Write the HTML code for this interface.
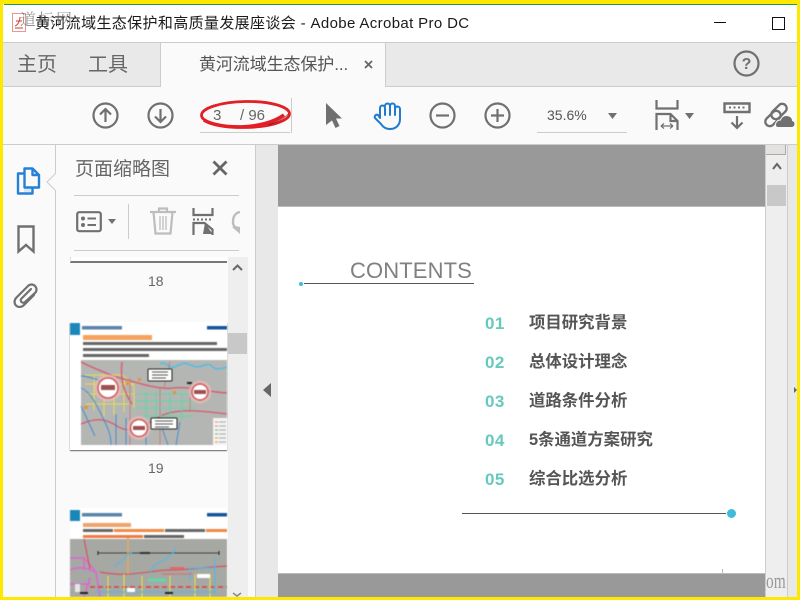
<!DOCTYPE html>
<html><head><meta charset="utf-8">
<style>
html,body{margin:0;padding:0;width:800px;height:600px;overflow:hidden;background:#fafafa}
body{position:relative;font-family:"Liberation Sans","Noto Sans CJK SC",sans-serif}
.a{position:absolute}
.t{position:absolute;white-space:nowrap;line-height:1}
svg{position:absolute;overflow:visible}
.blur{filter:blur(.45px)}
</style></head><body>
<div class="a" style="left:0;top:5px;width:800px;height:37px;background:#fff"></div>
<div class="a" style="left:0;top:42px;width:800px;height:1px;background:#ccc"></div>
<div class="a" style="left:0;top:43px;width:800px;height:43px;background:#e9e9e9"></div>
<div class="a" style="left:0;top:86px;width:800px;height:1px;background:#ccc"></div>
<div class="a" style="left:160px;top:43px;width:226px;height:44px;background:#fafafa;border-left:1px solid #ccc;border-right:1px solid #ccc;box-sizing:border-box"></div>
<div class="a" style="left:0;top:144px;width:800px;height:1px;background:#ccc"></div>

<!-- title -->
<svg style="left:12px;top:13px" width="14" height="20" viewBox="0 0 14 20"><rect x="0.5" y="0.5" width="13" height="18" fill="#fff" stroke="#e39a92"/><path d="M3 13c3-1 5-5 5-9M4 8h6M3 15h8" stroke="#d83a2c" fill="none"/></svg>
<div class="t" style="left:35px;top:16px;font-size:15px;color:#1a1a1a;letter-spacing:.36px">黄河流域生态保护和高质量发展座谈会 - Adobe Acrobat Pro DC</div>
<div class="t" style="left:20px;top:11px;font-size:16px;color:#666;opacity:.7;font-family:'Noto Serif CJK SC',serif;letter-spacing:2px">道标网</div>
<div class="a" style="left:714px;top:22px;width:12px;height:1px;background:#111"></div>
<div class="a" style="left:772px;top:17px;width:11px;height:11px;border:1px solid #111"></div>

<!-- tabs -->
<div class="t" style="left:17px;top:55px;font-size:20px;color:#666">主页</div>
<div class="t" style="left:88px;top:55px;font-size:20px;color:#666">工具</div>
<div class="t" style="left:199px;top:56px;font-size:17px;color:#555;letter-spacing:-.1px">黄河流域生态保护...</div>
<svg style="left:364px;top:60px" width="9" height="9" viewBox="0 0 9 9"><path d="M1 1l7 7M8 1l-7 7" stroke="#666" stroke-width="1.800"/></svg>
<svg style="left:733px;top:50px" width="27" height="27" viewBox="0 0 27 27"><circle cx="13.500" cy="13.500" r="12" fill="none" stroke="#707070" stroke-width="2.200"/><text x="13.500" y="19" font-size="16" font-weight="bold" fill="#707070" text-anchor="middle" font-family="Liberation Sans">?</text></svg>

<!-- toolbar -->
<svg style="left:92px;top:102px" width="27" height="27" viewBox="0 0 27 27" fill="none" stroke="#707070" stroke-width="2.200"><circle cx="13.500" cy="13.500" r="12"/><path d="M13.500 20V7M8 12.500l5.500-5.500 5.500 5.500"/></svg>
<svg style="left:147px;top:102px" width="27" height="27" viewBox="0 0 27 27" fill="none" stroke="#707070" stroke-width="2.200"><circle cx="13.500" cy="13.500" r="12"/><path d="M13.500 7v13M8 14.500l5.500 5.500 5.500-5.500"/></svg>
<div class="t" style="left:213px;top:108px;font-size:15px;color:#666">3</div>
<div class="t" style="left:240px;top:108px;font-size:15px;color:#666">/ 96</div>
<div class="a" style="left:200px;top:132px;width:90px;height:1px;background:#ccc"></div>
<div class="a" style="left:291px;top:98px;width:1px;height:35px;background:#ccc"></div>
<svg style="left:198px;top:98px" width="96" height="36" viewBox="0 0 96 36"><ellipse cx="47.500" cy="16.500" rx="44" ry="13" fill="none" stroke="#e21f26" stroke-width="2.800" transform="rotate(-1 47.500 16.500)"/><path d="M6 22c14 9 58 11 80-5" fill="none" stroke="#e21f26" stroke-width="3.600"/><path d="M70 27c8-2 16-6 20-11" fill="none" stroke="#6b1616" stroke-width="1" opacity=".6"/></svg>
<svg style="left:325px;top:102px" width="18" height="27" viewBox="0 0 18 27"><path d="M1 1L17 16.500H11L14.500 24 10.500 26 7 18.500 1 23Z" fill="#707070"/></svg>
<svg style="left:373px;top:101px" width="29" height="30" viewBox="0 0 29 30" fill="none" stroke="#1f7bd0" stroke-width="2" stroke-linecap="round" stroke-linejoin="round"><path d="M7 17V7a2.500 2.500 0 0 1 5 0V14M12 5a2.500 2.500 0 0 1 5 0V14M17 5a2.500 2.500 0 0 1 5 0V14M22 8a2.500 2.500 0 0 1 5 0V18c0 6-4 10-10 10-4 0-7-2-9-5L2 17c-1-2 1-4 3-3l2 3"/></svg>
<svg style="left:429px;top:102px" width="27" height="27" viewBox="0 0 27 27" fill="none" stroke="#707070" stroke-width="2.200"><circle cx="13.500" cy="13.500" r="12"/><path d="M7 13.500h13"/></svg>
<svg style="left:484px;top:102px" width="27" height="27" viewBox="0 0 27 27" fill="none" stroke="#707070" stroke-width="2.200"><circle cx="13.500" cy="13.500" r="12"/><path d="M7 13.500h13M13.500 7v13"/></svg>
<div class="t" style="left:547px;top:108px;font-size:14px;color:#555">35.6%</div>
<svg style="left:608px;top:113px" width="10" height="6"><path d="M0 0h9L4.500 6Z" fill="#707070"/></svg>
<div class="a" style="left:537px;top:132px;width:90px;height:1px;background:#ccc"></div>
<svg style="left:655px;top:100px" width="24" height="32" viewBox="0 0 24 32" fill="none" stroke="#707070" stroke-width="2.200"><path d="M1.500 0v8.500h21V0"/><path d="M1.500 30V14h14l7 7v9M15.500 14v7h7"/><path d="M6 26h12M6 26l3-2.500M6 26l3 2.500M18 26l-3-2.500M18 26l-3 2.500" stroke-width="1.200"/></svg>
<svg style="left:685px;top:113px" width="10" height="6"><path d="M0 0h9L4.500 6Z" fill="#707070"/></svg>
<svg style="left:723px;top:102px" width="28" height="27" viewBox="0 0 28 27"><path d="M1.500 1.500h25v8.500h-25z" fill="none" stroke="#707070" stroke-width="2.400"/><path d="M6 5.500h2M10.500 5.500h2M15 5.500h2M19.500 5.500h2" stroke="#707070" stroke-width="2"/><path d="M14 14v12M8.500 20.500l5.500 5.500 5.500-5.500" fill="none" stroke="#707070" stroke-width="2.200"/></svg>
<svg style="left:764px;top:101px" width="31" height="28" viewBox="0 0 31 28"><g fill="none" stroke="#707070" stroke-width="2.300"><rect x="6" y="6" width="18" height="9" rx="4.500" transform="rotate(-45 15 10.500)"/><rect x="0" y="13" width="18" height="9" rx="4.500" transform="rotate(-45 9 17.500)"/></g><path d="M12 26c-1.500-4 1-7 4.500-7 1-3 3.500-4.500 6-4.500 3.500 0 6 2.500 6 5 1.500.5 2.500 2 2.500 3.500 0 2-1.500 3.500-3 3.500H14z" fill="#707070" stroke="#fafafa" stroke-width="1"/></svg>

<!-- left rail -->
<div class="a" style="left:55px;top:145px;width:1px;height:455px;background:#ccc"></div>
<svg style="left:15px;top:166px" width="26" height="30" viewBox="0 0 26 30" fill="none" stroke="#2680d6" stroke-width="2.400" stroke-linejoin="round"><rect x="9" y="8" width="9" height="18" fill="#dbe8f5" stroke="none"/><path d="M9.500 2.500h8l6.500 6.500v12.500H9.500z" fill="#fafafa"/><path d="M17.500 2.500V9H24"/><path d="M9.500 7.500H3V27.500h14.500v-6"/></svg>
<svg style="left:46px;top:173px" width="10" height="18" viewBox="0 0 10 18"><path d="M10 0L1 9l9 9" fill="#fafafa" stroke="#ccc"/></svg>
<svg style="left:17px;top:225px" width="18" height="29" viewBox="0 0 18 29"><path d="M1.500 1.500h15v25L9 20l-7.500 6.500z" fill="none" stroke="#707070" stroke-width="2.400"/></svg>
<svg style="left:13px;top:281px" width="26" height="28" viewBox="0 0 26 28" fill="none" stroke="#707070" stroke-width="2.200" stroke-linecap="round"><path d="M21 14L11 24c-2.500 2.500-6 2.500-8 .5s-2-5.500.5-8L15 5c2-2 5-2 7 0s2 5 0 7L12 21c-1 1-2.500 1-3.500 0s-1-2.500 0-3.500L18 8"/></svg>

<!-- panel -->
<div class="t" style="left:75px;top:160px;font-size:19px;color:#666">页面缩略图</div>
<svg style="left:212px;top:160px" width="16" height="16" viewBox="0 0 16 16"><path d="M1.500 1.500l13 13M14.500 1.500l-13 13" stroke="#666" stroke-width="2.800"/></svg>
<div class="a" style="left:74px;top:195px;width:165px;height:1px;background:#ccc"></div>
<svg style="left:76px;top:211px" width="26" height="22" viewBox="0 0 26 22"><rect x="1.200" y="1.200" width="23.600" height="19" rx="2" fill="none" stroke="#707070" stroke-width="2.200"/><circle cx="7" cy="7.500" r="2" fill="#707070"/><circle cx="7" cy="14" r="2" fill="#707070"/><path d="M11.500 7.500H20M11.500 14H20" stroke="#707070" stroke-width="2"/></svg>
<svg style="left:108px;top:219px" width="9" height="6"><path d="M0 0h8L4 5Z" fill="#707070"/></svg>
<div class="a" style="left:128px;top:204px;width:1px;height:35px;background:#ccc"></div>
<svg style="left:150px;top:207px" width="26" height="28" viewBox="0 0 26 28" fill="none" stroke="#bdbdbd" stroke-width="2.200"><path d="M0 5h26M9 5V1.500h8V5M3.500 5l2 21.500h15l2-21.500"/><path d="M10 9v14M13 9v14M16 9v14" stroke-width="1.300"/></svg>
<svg style="left:192px;top:208px" width="22" height="27" viewBox="0 0 22 27" fill="none" stroke="#707070" stroke-width="2.200"><path d="M1.500 0v7h19V0"/><path d="M1 11.500h2M5 11.500h2M9 11.500h2M13 11.500h2M17 11.500h2" stroke-width="2"/><path d="M1.500 27V15h11l8 6.500V27"/><path d="M13 15l7.500 11H11z" fill="#707070" stroke="none"/></svg>
<svg style="left:232px;top:211px" width="8" height="24" viewBox="0 0 8 24"><path d="M8 1C3 2 1 6 1 11s3 6 7 6" fill="none" stroke="#bdbdbd" stroke-width="2.400"/><path d="M0 16h8v7z" fill="#bdbdbd"/></svg>
<div class="a" style="left:74px;top:250px;width:165px;height:1px;background:#ccc"></div>

<div class="a" style="left:70px;top:257px;width:157px;height:6px;background:#fff;border-bottom:2px solid #777;border-left:1px solid #ddd;box-sizing:border-box"></div>
<div class="t" style="left:148px;top:274px;font-size:14px;color:#666">18</div>

<!-- thumb 19 -->
<div class="a" style="left:70px;top:322px;width:157px;height:128px;background:#fff;box-shadow:0 1px 1px #666"></div>
<svg class="blur" style="left:70px;top:322px;width:157px;height:128px;overflow:hidden" width="157" height="128" viewBox="0 0 157 128">
<rect width="10" height="12" y="1" fill="#1b87b8"/>
<rect x="12" y="4" width="40" height="3.500" fill="#5a84a8"/>
<rect x="137" y="4" width="20" height="3.500" fill="#17559a"/>
<rect x="13" y="13" width="69" height="5" fill="#f5a25f"/>
<rect x="13" y="20" width="134" height="3" fill="#666"/>
<rect x="13" y="26" width="144" height="3" fill="#666"/>
<rect x="13" y="32" width="66" height="3" fill="#666"/>
<rect x="11" y="38" width="146" height="85" fill="#b4b6b3"/>
<g fill="none">
<path d="M90 42c6-4 8 5 14 3s8-5 14-3 8 4 14 2 8-2 11 1 8 2 14 0" stroke="#52bfe0" stroke-width="1.600"/>
<path d="M15 53h38l11 12v22M15 62h50M17 72h46M16 82h44M24 53v35M34 53v42M44 53v40M54 58v32" stroke="#e6dc55" stroke-width="1"/>
<path d="M11 40c12 6 18 8 32 14 22 6 45 14 60 12s36 4 54 5M11 102c14-6 24-6 36 2 12 8 24 2 40-8s40-8 70-4M52 40c-2 18 2 30 10 42" stroke="#d9586a" stroke-width="1.300"/>
<path d="M60 56v67M90 66v57M120 60v30M100 40l-6 26" stroke="#cf767c" stroke-width=".9"/>
<path d="M64 86h62M68 72h70M76 70v32M86 70v30M100 70v34M112 72v26M66 79h70M72 94h50" stroke="#5ed8a6" stroke-width=".9"/>
<path d="M11 66c10 4 16 18 22 30s8 18 8 27M11 84l14 30M46 92v31M56 96v27M11 54c8 0 16 4 24 6M76 108v15M92 106l6 17M110 100l-4 23" stroke="#3d88d5" stroke-width=".9"/>
</g>
<rect x="14" y="84" width="4" height="3" fill="#e8923a"/><rect x="56" y="60" width="3" height="3" fill="#e8923a"/><rect x="68" y="56" width="3" height="3" fill="#e8923a"/><rect x="103" y="69" width="3" height="3" fill="#e8923a"/><rect x="117" y="60" width="5" height="2" fill="#222"/>
<circle cx="38" cy="66" r="13.500" fill="#e9b9b9" opacity=".75"/><circle cx="38" cy="66" r="10" fill="#fff" stroke="#cf5a5a" stroke-width="1.500"/><rect x="31" y="63" width="14" height="5" fill="#9d5050"/>
<circle cx="130" cy="70" r="11.500" fill="#e9b9b9" opacity=".75"/><circle cx="130" cy="70" r="8" fill="#fff" stroke="#cf5a5a" stroke-width="1.500"/><rect x="124" y="68" width="12" height="4" fill="#9d5050"/>
<circle cx="69" cy="106" r="12" fill="#e9b9b9" opacity=".75"/><circle cx="69" cy="106" r="8.500" fill="#fff" stroke="#cf5a5a" stroke-width="1.500"/><rect x="63" y="104" width="12" height="4" fill="#9d5050"/>
<rect x="78" y="47" width="24" height="12" rx="1" fill="#fff" stroke="#222"/><path d="M82 50h16M82 53h16M82 56h14" stroke="#555"/>
<rect x="81" y="96" width="26" height="11" rx="1" fill="#fff" stroke="#222"/><path d="M85 99h18M85 102h18M85 105h14" stroke="#555"/>
<rect x="143" y="96" width="14" height="27" fill="#f2f2f2"/><path d="M149 100h7M149 104h7M149 108h7M149 112h7M149 116h7M149 120h7" stroke="#aaa"/><path d="M145 100h3M145 104h3" stroke="#e86"/><path d="M145 108h3M145 112h3" stroke="#6b6"/><path d="M145 116h3M145 120h3" stroke="#e93"/>
</svg>
<div class="t" style="left:148px;top:461px;font-size:14px;color:#666">19</div>

<!-- thumb 20 -->
<div class="a" style="left:70px;top:508px;width:157px;height:89px;background:#fff"></div>
<svg class="blur" style="left:70px;top:508px;width:157px;height:89px;overflow:hidden" width="157" height="89" viewBox="0 0 157 89">
<rect y="2" width="10" height="11" fill="#1b87b8"/>
<rect x="12" y="5" width="40" height="3.500" fill="#5a84a8"/>
<rect x="137" y="5" width="20" height="3.500" fill="#17559a"/>
<rect x="13" y="15" width="48" height="4" fill="#f0a36b"/>
<rect x="13" y="21" width="30" height="3" fill="#666"/><rect x="44" y="21" width="50" height="3" fill="#ee8a45"/><rect x="95" y="21" width="40" height="3" fill="#666"/><rect x="136" y="21" width="21" height="3" fill="#ee8a45"/>
<rect x="13" y="27" width="60" height="3" fill="#ee7a45"/><rect x="74" y="27" width="40" height="3" fill="#666"/>
<rect y="31" width="157" height="58" fill="#a5a8a3"/>
<g fill="none">
<path d="M28 45h121" stroke="#444"/><path d="M28 43v4M149 43v4" stroke="#222"/>
<path d="M70 45h10" stroke="#333" stroke-width="2"/>
<path d="M0 50h14l12 14M0 62c10-4 16-2 26 2M26 64l4 25M0 76h20M14 50v12M20 70l-6 19" stroke="#e85cd8" stroke-width="1.300"/>
<path d="M30 64c30 6 50-2 70-2s25-2 57-4M14 31l6 30" stroke="#d9525f" stroke-width="1.200"/>
<path d="M20 79h137" stroke="#e23b3b" stroke-width="1.500" stroke-dasharray="5 3"/>
<path d="M38 68v21M54 66v23M72 68v21M100 68v21M125 66v23M140 66v23" stroke="#eddc48" stroke-width="1.100"/>
<path d="M58 30v36" stroke="#e8a95a" stroke-width="1.500"/>
<path d="M80 66c2-14 20-12 26-26M44 58c8-4 12-10 18-14M120 60h24M120 60v12M145 50v36M25 84h120" stroke="#57b7e6" stroke-width="1.200"/>
<path d="M92 66h30" stroke="#e86565" stroke-width="1"/><path d="M100 60h14" stroke="#e86565" stroke-width="2"/>
<path d="M78 72h18" stroke="#62d8a8" stroke-width="3"/>
</g>
<rect x="127" y="66" width="13" height="4" fill="#fff"/><rect x="57" y="80" width="8" height="4" fill="#fff"/><rect x="5" y="76" width="5" height="8" fill="#e6e6e6"/><rect x="95" y="84" width="8" height="2" fill="#222"/><rect x="10" y="84" width="8" height="2" fill="#222"/>
</svg>

<!-- panel scrollbar -->
<div class="a" style="left:228px;top:257px;width:20px;height:340px;background:#eee"></div>
<div class="a" style="left:228px;top:333px;width:19px;height:21px;background:#c8c8c8"></div>
<svg style="left:232px;top:264px" width="11" height="7"><path d="M1 6l4.500-4.500L10 6" fill="none" stroke="#666" stroke-width="2"/></svg>
<svg style="left:232px;top:593px" width="11" height="4"><path d="M1 0l4 3 4-3" fill="none" stroke="#888" stroke-width="1.500"/></svg>

<!-- document area -->
<div class="a" style="left:255px;top:145px;width:1px;height:455px;background:#ccc"></div>
<div class="a" style="left:256px;top:145px;width:22px;height:455px;background:#e8e8e8"></div>
<svg style="left:263px;top:383px" width="9" height="14"><path d="M8 0v14L0 7Z" fill="#666"/></svg>
<div class="a" style="left:278px;top:145px;width:488px;height:452px;background:#fff"></div>
<div class="a" style="left:278px;top:145px;width:488px;height:61px;background:#999;border-bottom:1px solid #bbb;box-sizing:content-box"></div>
<div class="a" style="left:278px;top:573px;width:488px;height:24px;background:#999;border-top:1px solid #bbb"></div>
<div class="a" style="left:722px;top:569px;width:1px;height:4px;background:#bbb"></div>

<div class="t" style="left:350px;top:260px;font-size:22px;color:#808080;letter-spacing:.12px">CONTENTS</div>
<div class="a" style="left:304px;top:283px;width:170px;height:1px;background:#555"></div>
<div class="a" style="left:299px;top:282px;width:4px;height:4px;border-radius:50%;background:#3fbcd8"></div>

<div class="t" style="left:485px;top:315px;font-size:17px;font-weight:bold;color:#66c9bc;letter-spacing:.4px">01</div>
<div class="t" style="left:529px;top:315px;font-size:16.400px;font-weight:bold;color:#555">项目研究背景</div>
<div class="t" style="left:485px;top:354px;font-size:17px;font-weight:bold;color:#66c9bc;letter-spacing:.4px">02</div>
<div class="t" style="left:529px;top:354px;font-size:16.400px;font-weight:bold;color:#555">总体设计理念</div>
<div class="t" style="left:485px;top:393px;font-size:17px;font-weight:bold;color:#66c9bc;letter-spacing:.4px">03</div>
<div class="t" style="left:529px;top:393px;font-size:16.400px;font-weight:bold;color:#555">道路条件分析</div>
<div class="t" style="left:485px;top:432px;font-size:17px;font-weight:bold;color:#66c9bc;letter-spacing:.4px">04</div>
<div class="t" style="left:529px;top:432px;font-size:16.400px;font-weight:bold;color:#555">5条通道方案研究</div>
<div class="t" style="left:485px;top:471px;font-size:17px;font-weight:bold;color:#66c9bc;letter-spacing:.4px">05</div>
<div class="t" style="left:529px;top:471px;font-size:16.400px;font-weight:bold;color:#555">综合比选分析</div>
<div class="a" style="left:462px;top:513px;width:264px;height:1px;background:#555"></div>
<div class="a" style="left:727px;top:509px;width:9px;height:9px;border-radius:50%;background:#3fbcd8"></div>

<!-- main scrollbar -->
<div class="a" style="left:765px;top:145px;width:1px;height:455px;background:#ccc"></div>
<div class="a" style="left:766px;top:145px;width:21px;height:455px;background:#eee"></div>
<div class="a" style="left:766px;top:145px;width:20px;height:10px;background:#e3e2e0;border-bottom:1px solid #aaa;border-right:1px solid #aaa;box-sizing:border-box"></div>
<div class="a" style="left:767px;top:185px;width:19px;height:21px;background:#c8c8c8"></div>
<svg style="left:772px;top:162px" width="10" height="8"><path d="M1 7l4-5 4 5" fill="none" stroke="#666" stroke-width="2"/></svg>
<div class="a" style="left:787px;top:145px;width:1px;height:455px;background:#ccc"></div>
<div class="a" style="left:788px;top:145px;width:12px;height:455px;background:#e8e8e8"></div>
<svg style="left:794px;top:387px" width="3" height="6"><path d="M0 0l3 3-3 3Z" fill="#666"/></svg>
<div class="t" style="left:766px;top:570px;font-size:22px;color:#999;font-family:'Liberation Serif',serif;transform:scaleX(.7);transform-origin:0 0">om</div>

<!-- yellow frame -->
<div class="a" style="left:0;top:0;width:800px;height:4px;background:#ffe800"></div>
<div class="a" style="left:4px;top:4px;width:793px;height:1px;background:#1f9a50"></div>
<div class="a" style="left:0;top:0;width:3px;height:600px;background:#ffe800"></div>
<div class="a" style="right:0;top:0;width:3px;height:600px;background:#ffe800"></div>
<div class="a" style="left:0;top:597px;width:800px;height:3px;background:#ffe800"></div>
</body></html>
